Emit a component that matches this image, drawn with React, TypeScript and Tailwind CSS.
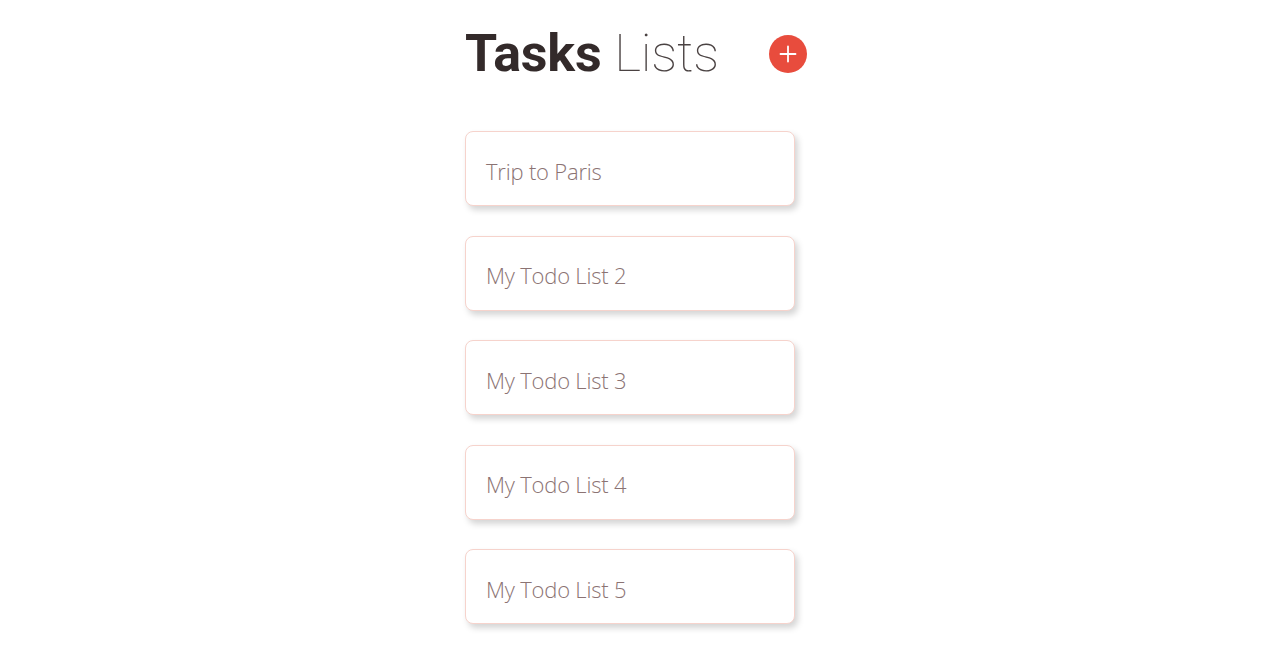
import React from "react";

const lists = ["Trip to Paris", "My Todo List 2", "My Todo List 3", "My Todo List 4", "My Todo List 5"];

export default function App() {
  return (
    <div className="min-h-screen bg-white">
      <div className="mx-auto w-[352px] pt-[22px]">
        <div className="flex items-center h-[64px]">
          <h1 className="text-[52px] leading-none text-[#332a2a] font-['Roboto',sans-serif] tracking-[-0.2px]">
            <span className="font-bold">Tasks</span>{" "}
            <span className="font-thin text-[#4a4242]">Lists</span>
          </h1>
          <button className="ml-[50px] w-[38px] h-[38px] rounded-full bg-[#e84c3d] flex items-center justify-center">
            <svg width="18" height="18" viewBox="0 0 18 18">
              <path d="M9 1.5V16.5M1.5 9H16.5" stroke="white" strokeWidth="1.8" strokeLinecap="round" />
            </svg>
          </button>
        </div>
        <div className="mt-[45px] flex flex-col gap-[29.5px]">
          {lists.map((l) => (
            <div
              key={l}
              className="w-[330px] h-[75px] rounded-[8px] border border-[#f6d3cc] bg-white shadow-[3px_4px_6px_rgba(0,0,0,0.17)] flex items-center pl-[20px] pt-[5px]"
            >
              <span className="text-[22px] font-light text-[#8b7373] font-['Open_Sans',sans-serif] tracking-[-0.2px]">{l}</span>
            </div>
          ))}
        </div>
      </div>
    </div>
  );
}
